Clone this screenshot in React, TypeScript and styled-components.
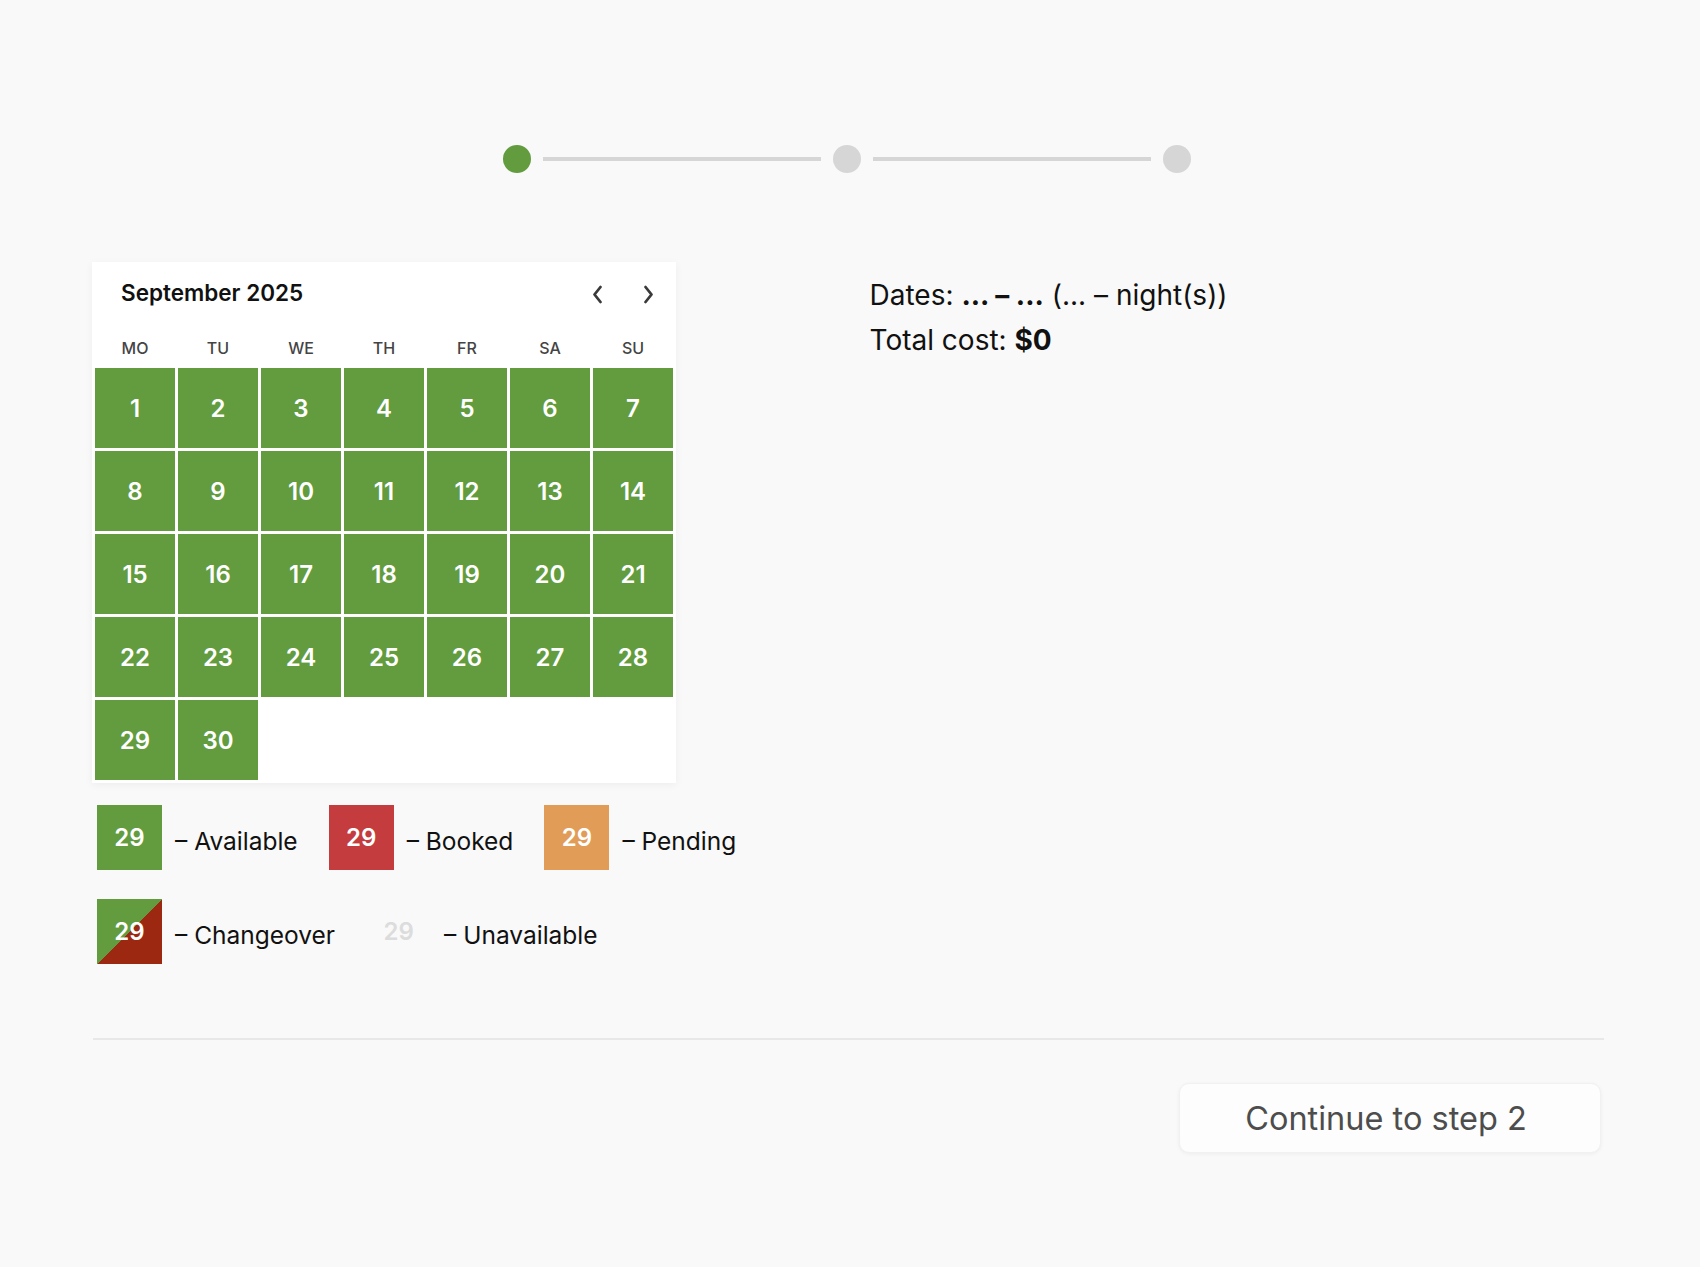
import styled, { createGlobalStyle } from "styled-components";

const GlobalStyle = createGlobalStyle`
  body {
    margin: 0;
    background: #f9f9f9;
    font-family: Inter, "Noto Sans", sans-serif;
    color: #111;
  }
`;

const GREEN = "#629c3e";

const WEEK = ["MO", "TU", "WE", "TH", "FR", "SA", "SU"];
const DAYS = Array.from({ length: 30 }, (_, i) => i + 1);

const LEGEND = [
  { kind: "available", label: "Available" },
  { kind: "booked", label: "Booked" },
  { kind: "pending", label: "Pending" },
  { kind: "changeover", label: "Changeover" },
  { kind: "unavailable", label: "Unavailable" },
];

const Chevron = ({ dir }: { dir: "left" | "right" }) => (
  <svg width="11" height="19" viewBox="0 0 11 19">
    <path
      d={dir === "left" ? "M8.5 2 L2.5 9.5 L8.5 17" : "M2.5 2 L8.5 9.5 L2.5 17"}
      fill="none"
      stroke="#3a3a3a"
      strokeWidth="2.8"
      strokeLinecap="round"
      strokeLinejoin="round"
    />
  </svg>
);

const App = () => {
  return (
    <>
      <GlobalStyle />
      <Page>
        <Stepper>
          <Dot active />
          <StepLine />
          <Dot />
          <StepLine />
          <Dot />
        </Stepper>

        <Main>
          <LeftCol>
            <Card>
              <CardHeader>
                <MonthTitle>September 2025</MonthTitle>
                <NavGroup>
                  <NavButton>
                    <Chevron dir="left" />
                  </NavButton>
                  <NavButton>
                    <Chevron dir="right" />
                  </NavButton>
                </NavGroup>
              </CardHeader>
              <WeekRow>
                {WEEK.map((d) => (
                  <WeekDay key={d}>{d}</WeekDay>
                ))}
              </WeekRow>
              <DayGrid>
                {DAYS.map((d) => (
                  <DayCell key={d}>{d}</DayCell>
                ))}
              </DayGrid>
            </Card>

            <Legend>
              {LEGEND.map((item) => (
                <LegendItem key={item.kind}>
                  <LegendBox kind={item.kind}>29</LegendBox>
                  <LegendLabel>– {item.label}</LegendLabel>
                </LegendItem>
              ))}
            </Legend>
          </LeftCol>

          <Summary>
            <div>
              Dates: <b>... – ...</b> (... – night(s))
            </div>
            <div>
              Total cost: <b>$0</b>
            </div>
          </Summary>
        </Main>

        <Divider />

        <Footer>
          <ContinueButton>Continue to step 2</ContinueButton>
        </Footer>
      </Page>
    </>
  );
};

export default App;

const Page = styled.div`
  width: 1511px;
  margin-left: calc(50% - 757px);
  padding-top: 145px;
  padding-bottom: 80px;
`;

const Stepper = styled.div`
  display: flex;
  align-items: center;
  justify-content: center;
  gap: 12px;
  margin-left: -4px;
`;

const Dot = styled.div<{ active?: boolean }>`
  width: 28px;
  height: 28px;
  border-radius: 50%;
  background: ${(p) => (p.active ? GREEN : "#d6d6d6")};
`;

const StepLine = styled.div`
  width: 278px;
  height: 4px;
  background: #d6d6d6;
`;

const Main = styled.div`
  display: grid;
  grid-template-columns: 1fr 1fr;
  margin-top: 89px;
`;

const LeftCol = styled.div`
  display: flex;
  flex-direction: column;
  align-items: flex-start;
`;

const Card = styled.div`
  width: 578px;
  padding: 0 3px 3px;
  margin-left: -1px;
  background: #fff;
  box-shadow: 0 2px 8px rgba(0, 0, 0, 0.05);
`;

const CardHeader = styled.div`
  height: 60px;
  display: flex;
  align-items: center;
  justify-content: space-between;
  padding: 0 10px 0 26px;
`;

const MonthTitle = styled.div`
  font-size: 22.5px;
  font-weight: 600;
  color: #111;
  padding-top: 1px;
`;

const NavGroup = styled.div`
  display: flex;
  gap: 21px;
  padding-top: 4px;
`;

const NavButton = styled.button`
  width: 30px;
  height: 30px;
  padding: 0;
  border: none;
  background: none;
  display: flex;
  align-items: center;
  justify-content: center;
  cursor: pointer;
`;

const WeekRow = styled.div`
  display: grid;
  grid-template-columns: repeat(7, 80px);
  column-gap: 3px;
  height: 46px;
  align-items: end;
`;

const WeekDay = styled.div`
  text-align: center;
  font-size: 16px;
  line-height: 20px;
  font-weight: 500;
  color: #444;
  padding-bottom: 10px;
`;

const DayGrid = styled.div`
  display: grid;
  grid-template-columns: repeat(7, 80px);
  grid-auto-rows: 80px;
  gap: 3px;
`;

const DayCell = styled.div`
  background: ${GREEN};
  color: #fff;
  font-size: 24px;
  font-weight: 600;
  display: flex;
  align-items: center;
  justify-content: center;
`;

const Legend = styled.div`
  display: flex;
  flex-wrap: wrap;
  column-gap: 31px;
  row-gap: 29px;
  margin-top: 22px;
  padding-left: 4px;
`;

const LegendItem = styled.div`
  display: flex;
  align-items: center;
  gap: 13px;
`;

const boxBg: Record<string, string> = {
  available: GREEN,
  booked: "#c43c3d",
  pending: "#e19d57",
  changeover: `linear-gradient(to bottom right, ${GREEN} 50%, #9c2812 50%)`,
  unavailable: "transparent",
};

const LegendBox = styled.div<{ kind: string }>`
  width: 65px;
  height: 65px;
  background: ${(p) => boxBg[p.kind]};
  color: ${(p) => (p.kind === "unavailable" ? "#dcdcdc" : "#fff")};
  font-size: 24px;
  font-weight: 600;
  display: flex;
  align-items: center;
  justify-content: center;
  box-sizing: border-box;
`;

const LegendLabel = styled.div`
  font-size: 24.5px;
  color: #111;
  padding-top: 6px;
`;

const Summary = styled.div`
  padding: 11px 0 0 21px;
  font-size: 28px;
  line-height: 45px;
  color: #111;

  b {
    font-weight: 700;
  }
`;

const Divider = styled.div`
  height: 2px;
  background: #e8e8e8;
  margin-top: 74px;
`;

const Footer = styled.div`
  display: flex;
  justify-content: flex-end;
  margin-top: 43px;
  padding-right: 3px;
`;

const ContinueButton = styled.button`
  width: 422px;
  height: 70px;
  padding: 0 8px 0 0;
  background: #fdfdfd;
  border: 1px solid #f1f1f1;
  border-radius: 10px;
  box-shadow: 0 1px 4px rgba(0, 0, 0, 0.05);
  font-family: Inter, "Noto Sans", sans-serif;
  font-size: 32.5px;
  color: #4d4d4d;
  cursor: pointer;
`;
